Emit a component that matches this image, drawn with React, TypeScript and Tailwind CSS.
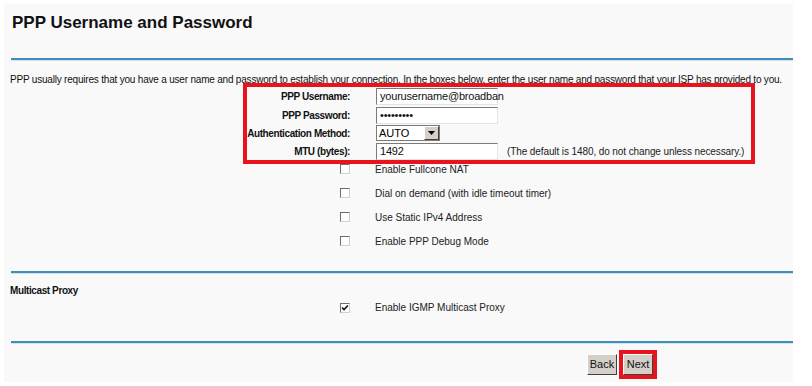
import React from "react";

const font = { fontFamily: '"Liberation Sans", Arial, sans-serif' };

const options = [
  { label: "Enable Fullcone NAT", checked: false },
  { label: "Dial on demand (with idle timeout timer)", checked: false },
  { label: "Use Static IPv4 Address", checked: false },
  { label: "Enable PPP Debug Mode", checked: false },
];

function Checkbox({ checked }: { checked?: boolean }) {
  return (
    <span className="flex h-[10px] w-[10px] items-center justify-center border border-t-[#6e6e6e] border-l-[#6e6e6e] border-b-[#d0d0d0] border-r-[#d0d0d0] bg-white">
      {checked && (
        <svg width="8" height="8" viewBox="0 0 8 8">
          <path d="M1 3.5 L3 5.5 L7 1.5" fill="none" stroke="#111" strokeWidth="1.6" />
        </svg>
      )}
    </span>
  );
}

function TextBox({ value }: { value: string }) {
  return (
    <div className="flex h-[17px] w-[122px] items-center border border-t-[#7b7b7b] border-l-[#7b7b7b] border-b-[#e4e4e4] border-r-[#e4e4e4] bg-white px-[3px] text-[11px] tracking-[-0.2px] text-[#111]">
      {value}
    </div>
  );
}

function Rule({ className = "" }: { className?: string }) {
  return <div className={`ml-[7px] h-[3px] border-t-2 border-[#3f8fb6] bg-[#cfe3ee] ${className}`} />;
}

function Button({ children }: { children: React.ReactNode }) {
  return (
    <button className="flex h-[21px] w-[30px] items-center justify-center border border-t-white border-l-white border-b-[#404040] border-r-[#404040] bg-[#d4d0c8] text-[11px] text-[#111]">
      {children}
    </button>
  );
}

const label = "w-[346px] text-right text-[10px] font-bold tracking-[-0.4px] text-[#111]";

export default function App() {
  return (
    <div className="h-[386px] w-[812px] bg-white pl-[4px] pt-[4px]" style={font}>
      <div className="relative h-[378px] w-[789px] bg-[#f9f9f9]">
        <h1 className="pl-[8px] pt-[8px] text-[17px] font-bold leading-[22px] text-[#111]">
          PPP Username and Password
        </h1>
        <Rule className="mt-[24px]" />
        <p className="mt-[12px] whitespace-nowrap pl-[6px] text-[10px] leading-[13px] tracking-[-0.2px] text-[#111]">
          PPP usually requires that you have a user name and password to establish your connection. In the boxes below, enter the user name and password that your ISP has provided to you.
        </p>

        <div className="mt-[1px] flex flex-col">
          <div className="flex h-[19px] items-center gap-[26px]">
            <span className={label}>PPP Username:</span>
            <TextBox value="yourusername@broadban" />
          </div>
          <div className="flex h-[18px] items-center gap-[26px]">
            <span className={label}>PPP Password:</span>
            <TextBox value="•••••••••" />
          </div>
          <div className="flex h-[18px] items-center gap-[26px]">
            <span className={label}>Authentication Method:</span>
            <div className="flex h-[16px] w-[64px] items-center justify-between border border-[#7b7b7b] bg-white pl-[2px] text-[11px]">
              <span>AUTO</span>
              <span className="flex h-[14px] w-[15px] items-center justify-center border border-t-white border-l-white border-b-[#404040] border-r-[#404040] bg-[#d4d0c8]">
                <svg width="7" height="4" viewBox="0 0 7 4">
                  <path d="M0 0 H7 L3.5 4 Z" fill="#000" />
                </svg>
              </span>
            </div>
          </div>
          <div className="flex h-[18px] items-center gap-[26px]">
            <span className={label}>MTU (bytes):</span>
            <TextBox value="1492" />
            <span className="-ml-[17px] text-[10px] tracking-[-0.1px] text-[#222]">
              (The default is 1480, do not change unless necessary.)
            </span>
          </div>
        </div>

        <div className="mt-[-3px] flex flex-col text-[10px] text-[#222]">
          {options.map((o) => (
            <div key={o.label} className="flex h-[24px] items-center">
              <span className="ml-[336px] w-[35px]">
                <Checkbox checked={o.checked} />
              </span>
              <span>{o.label}</span>
            </div>
          ))}
        </div>

        <Rule className="mt-[18px]" />
        <div className="mt-[10px] pl-[6px] text-[10px] font-bold leading-[13px] tracking-[-0.4px] text-[#111]">
          Multicast Proxy
        </div>
        <div className="mt-[4px] flex h-[13px] items-center text-[10px] text-[#222]">
          <span className="ml-[336px] w-[35px]">
            <Checkbox checked />
          </span>
          <span>Enable IGMP Multicast Proxy</span>
        </div>
        <Rule className="mt-[27px]" />

        <div className="mt-[6px] flex items-end pl-[583px]">
          <div className="mb-[4px] mr-[2px]">
            <Button>Back</Button>
          </div>
          <div className="border-4 border-[#e8131c]">
            <Button>Next</Button>
          </div>
        </div>

        <div className="pointer-events-none absolute left-[239px] top-[79px] h-[81px] w-[512px] border-4 border-[#e8131c]" />
      </div>
    </div>
  );
}
